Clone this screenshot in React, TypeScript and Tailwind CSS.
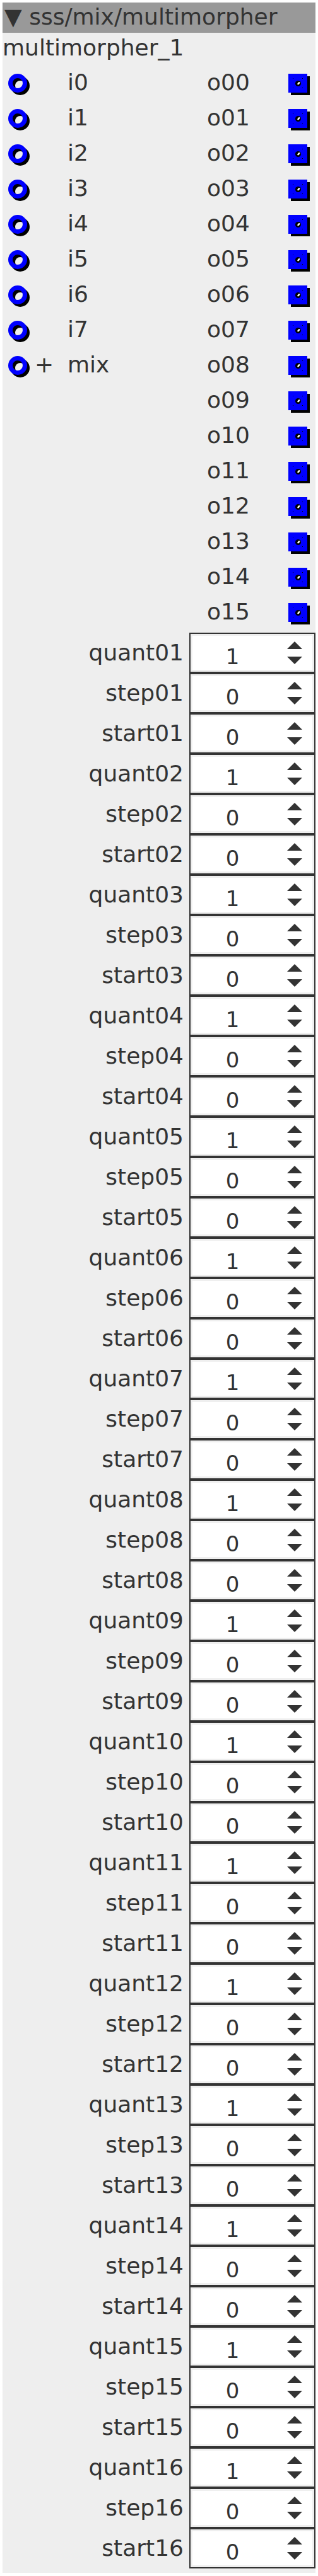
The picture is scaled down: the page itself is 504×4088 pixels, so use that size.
const inlets = ["i0", "i1", "i2", "i3", "i4", "i5", "i6", "i7", "mix"];
const outlets = Array.from({ length: 16 }, (_, i) => `o${String(i).padStart(2, "0")}`);
const params = Array.from({ length: 16 }, (_, i) => {
  const n = String(i + 1).padStart(2, "0");
  return [
    { name: `quant${n}`, value: 1 },
    { name: `step${n}`, value: 0 },
    { name: `start${n}`, value: 0 },
  ];
}).flat();

function InletIcon() {
  return (
    <svg width="36" height="36" viewBox="0 0 36 36" className="shrink-0">
      <circle cx="19" cy="19" r="11.5" fill="none" stroke="#000" strokeWidth="7" />
      <circle cx="15" cy="15" r="11.5" fill="none" stroke="#0000ff" strokeWidth="7" />
    </svg>
  );
}

function OutletIcon() {
  return (
    <svg width="35" height="35" viewBox="0 0 35 35" className="shrink-0">
      <rect x="4" y="4" width="30" height="30" fill="#000" />
      <rect x="0" y="0" width="30" height="30" fill="#0000ff" />
      <rect x="7" y="7" width="1" height="1" fill="#000" />
      <rect x="22" y="7" width="1" height="1" fill="#000" />
      <rect x="7" y="22" width="1" height="1" fill="#000" />
      <rect x="22" y="22" width="1" height="1" fill="#000" />
      <circle cx="15.5" cy="15.5" r="4.5" fill="#000" />
      <ellipse cx="16.3" cy="15.2" rx="2.6" ry="1.4" fill="#fff" transform="rotate(-45 16.3 15.2)" />
    </svg>
  );
}

function Spinner() {
  return (
    <svg width="24" height="36" viewBox="0 0 24 36">
      <polygon points="0,12 12,0 24,12" fill="#333" />
      <polygon points="0,24 24,24 12,36" fill="#333" />
    </svg>
  );
}

function NumberRow({ name, value }: { name: string; value: number }) {
  return (
    <div className="flex h-[64px]">
      <div className="flex w-[296px] items-center justify-end pr-[9px] text-[36px]">{name}</div>
      <div className="flex w-[200px] border-2 border-[#333] bg-white">
        <div className="flex flex-1 border-[3px] border-[#efefef]">
          <div className="flex w-[127px] items-center justify-center pt-[12px] text-[34px]">{value}</div>
          <div className="flex flex-1 items-center justify-center pl-[6px]">
            <Spinner />
          </div>
        </div>
      </div>
    </div>
  );
}

export default function App() {
  return (
    <div className="w-[504px] bg-white p-1 font-['DejaVu_Sans',sans-serif] text-[#333]">
      <div className="w-[496px] bg-[#eeeeee] pb-[7px]">
        {/* title bar */}
        <div className="h-[48px] bg-[#999999] pl-[3px] text-[36px] leading-[45px] whitespace-nowrap">
          ▼ sss/mix/multimorpher
        </div>
        <div className="h-[50px] text-[36px] leading-[47px]">multimorpher_1</div>

        {/* inlets / outlets */}
        <div className="mt-[2px] flex flex-col">
          {outlets.map((o, i) => {
            const inlet = inlets[i];
            return (
              <div key={o} className="flex h-[56px] items-start text-[36px] leading-[53px]">
                <div className="flex w-[324px] items-start">
                  {inlet ? (
                    <>
                      <div className="ml-[9px] mt-[13px] w-[36px]">
                        <InletIcon />
                      </div>
                      <div className="w-[58px] pl-[6px]">{inlet === "mix" ? "+" : ""}</div>
                      <span>{inlet}</span>
                    </>
                  ) : null}
                </div>
                <span className="w-[129px]">{o}</span>
                <div className="mt-[13px]">
                  <OutletIcon />
                </div>
              </div>
            );
          })}
        </div>

        {/* number boxes */}
        <div className="mt-[4px] flex flex-col">
          {params.map((p) => (
            <NumberRow key={p.name} name={p.name} value={p.value} />
          ))}
        </div>
      </div>
    </div>
  );
}
